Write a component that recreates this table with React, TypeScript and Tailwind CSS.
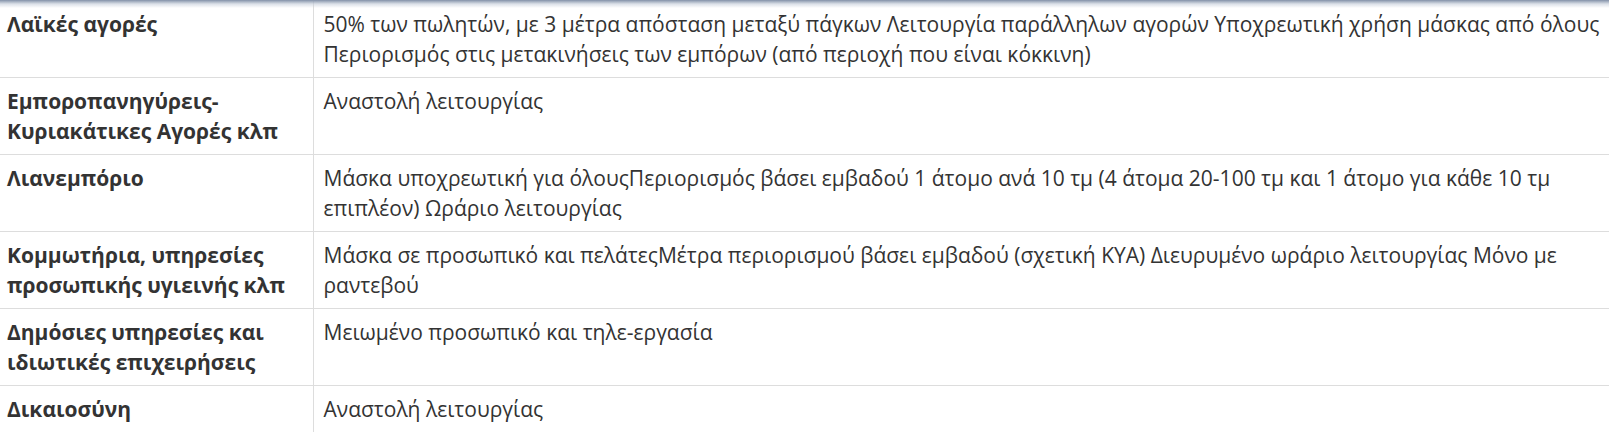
const rows: [string, string][] = [
  [
    "Λαϊκές αγορές",
    "50% των πωλητών, με 3 μέτρα απόσταση μεταξύ πάγκων Λειτουργία παράλληλων αγορών Υποχρεωτική χρήση μάσκας από όλους Περιορισμός στις μετακινήσεις των εμπόρων (από περιοχή που είναι κόκκινη)",
  ],
  ["Εμποροπανηγύρεις- Κυριακάτικες Αγορές κλπ", "Αναστολή λειτουργίας"],
  [
    "Λιανεμπόριο",
    "Μάσκα υποχρεωτική για όλουςΠεριορισμός βάσει εμβαδού 1 άτομο ανά 10 τμ (4 άτομα 20-100 τμ και 1 άτομο για κάθε 10 τμ επιπλέον) Ωράριο λειτουργίας",
  ],
  [
    "Κομμωτήρια, υπηρεσίες προσωπικής υγιεινής κλπ",
    "Μάσκα σε προσωπικό και πελάτεςΜέτρα περιορισμού βάσει εμβαδού (σχετική ΚΥΑ) Διευρυμένο ωράριο λειτουργίας Μόνο με ραντεβού",
  ],
  ["Δημόσιες υπηρεσίες και ιδιωτικές επιχειρήσεις", "Μειωμένο προσωπικό και τηλε-εργασία"],
  ["Δικαιοσύνη", "Αναστολή λειτουργίας"],
];

const App = () => {
  return (
    <div className="relative w-[1609px] h-[432px] overflow-hidden bg-white font-['Open_Sans',sans-serif] text-[21px] leading-[30px] text-[#333]">
      <div className="pointer-events-none absolute inset-x-0 top-0 h-[8px] bg-gradient-to-b from-[#8593aa] via-[#c5cdd9]/60 to-transparent" />
      <table className="w-full border-collapse">
        <tbody>
          {rows.map(([label, text], i) => (
            <tr key={i} className="border-t border-[#dddddd]">
              <td className="w-[313px] border-r border-[#dddddd] pl-[7px] pr-2 pt-2 pb-2 align-top font-bold">
                {label}
              </td>
              <td className="pl-[10px] pr-2 pt-2 pb-2 align-top">{text}</td>
            </tr>
          ))}
        </tbody>
      </table>
    </div>
  );
};

export default App;
